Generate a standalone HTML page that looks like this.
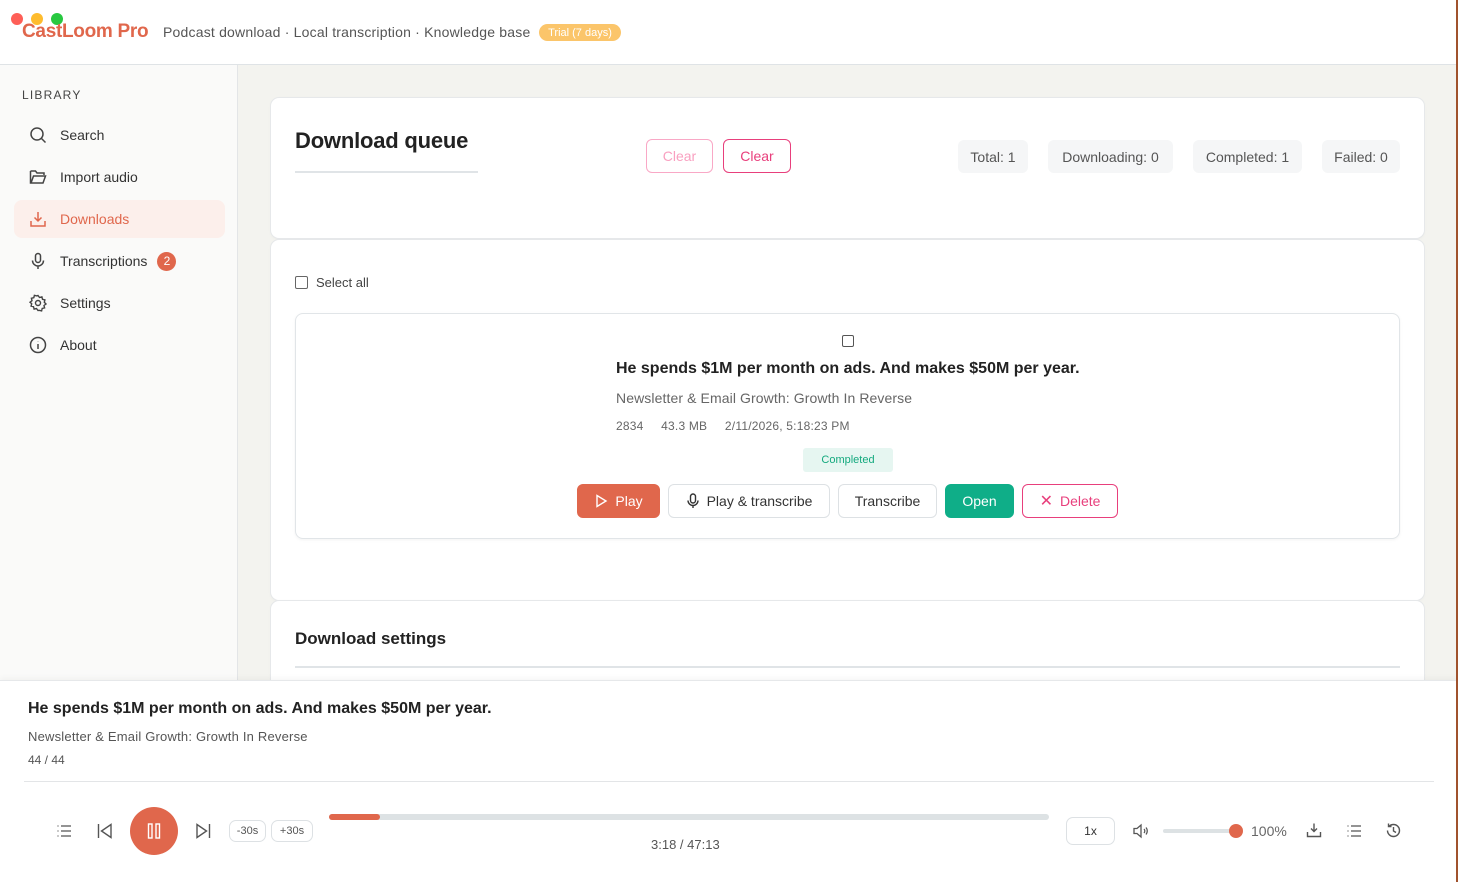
<!DOCTYPE html>
<html><head><meta charset="utf-8"><style>
*{box-sizing:border-box;margin:0;padding:0}
body{width:1458px;height:882px;overflow:hidden;font-family:"Liberation Sans",sans-serif;background:#f3f3ef;position:relative;color:#222}
.top{position:absolute;left:0;top:0;width:1458px;height:65px;background:#fff;border-bottom:1px solid #dfe3e6}
.dot{position:absolute;top:13px;width:12px;height:12px;border-radius:50%}
.side{position:absolute;left:0;top:65px;width:238px;height:620px;background:#fafaf9;border-right:1px solid #e3e5e7}
.nav{position:absolute;left:14px;width:211px;height:38px;display:flex;align-items:center;padding-left:46px;font-size:14px;color:#333;border-radius:8px}
.nav svg{position:absolute;left:15px;top:10px}
.card{position:absolute;left:271px;width:1153px;background:#fff;border-radius:8px;box-shadow:0 0 0 1px #e6e8ea,0 1px 3px rgba(0,0,0,.05)}
.btn{position:absolute;height:34px;border-radius:6px;font-size:14px;display:flex;align-items:center;justify-content:center;gap:7px;border:1px solid #dde1e4;background:#fff;color:#333}
.stat{position:absolute;top:140px;height:33px;border-radius:6px;background:#f5f6f7;font-size:14px;color:#555;display:flex;align-items:center;justify-content:center}
.player{position:absolute;left:0;top:680px;width:1458px;height:202px;background:#fff;border-top:1px solid #e6e8ea;box-shadow:0 -2px 6px rgba(0,0,0,.04)}
.ic{position:absolute}
.small{position:absolute;top:820px;height:22px;border:1px solid #dde1e4;border-radius:7px;font-size:11px;color:#555;display:flex;align-items:center;justify-content:center}
</style></head><body>
<div class="top">
 <div class="dot" style="left:11px;background:#fe5f57"></div>
 <div class="dot" style="left:31px;background:#febc2e"></div>
 <div class="dot" style="left:51px;background:#28c840"></div>
 <div style="position:absolute;left:22px;top:21px;font-size:19px;color:#e0674c;font-weight:bold;letter-spacing:-0.3px">CastLoom Pro</div>
 <div style="position:absolute;left:163px;top:24px;font-size:14px;color:#555;letter-spacing:0.2px">Podcast download · Local transcription · Knowledge base</div>
 <div style="position:absolute;left:539px;top:24px;height:17px;width:82px;border-radius:9px;background:#fbc56a;color:#fff;font-size:11px;display:flex;align-items:center;justify-content:center">Trial (7 days)</div>
</div>
<div style="position:absolute;right:0;top:0;width:2px;height:882px;background:#a0522d;z-index:5"></div>
<div class="side">
 <div style="position:absolute;left:22px;top:23px;font-size:12px;letter-spacing:1.2px;color:#444">LIBRARY</div>
 <div class="nav" style="top:51px"><svg width="18" height="18" viewBox="0 0 18 18" fill="none" stroke="#444" stroke-width="1.5"><circle cx="8" cy="8" r="6"/><path d="M12.5 12.5l4 4"/></svg>Search</div>
 <div class="nav" style="top:93px"><svg width="18" height="18" viewBox="0 0 18 18" fill="none" stroke="#444" stroke-width="1.5"><path d="M1.5 3h5l1.5 2h7v2M1.5 3v12h12.5l2.5-7H4.5L2 15"/></svg>Import audio</div>
 <div class="nav" style="top:135px;background:#fcefeb;color:#e0674c"><svg width="18" height="18" viewBox="0 0 18 18" fill="none" stroke="#e0674c" stroke-width="1.5"><path d="M9 2v9M5.5 7.5L9 11l3.5-3.5M2 11v5h14v-5"/></svg>Downloads</div>
 <div class="nav" style="top:177px"><svg width="18" height="18" viewBox="0 0 18 18" fill="none" stroke="#444" stroke-width="1.5"><rect x="6.5" y="1.5" width="5" height="9" rx="2.5"/><path d="M3.5 8.5a5.5 5.5 0 0011 0M9 14v3"/></svg>Transcriptions<span style="margin-left:10px;width:19px;height:19px;border-radius:50%;background:#e0674c;color:#fff;font-size:12px;display:flex;align-items:center;justify-content:center">2</span></div>
 <div class="nav" style="top:219px"><svg width="18" height="18" viewBox="0 0 18 18" fill="none" stroke="#444" stroke-width="1.4"><circle cx="9" cy="9" r="2.5"/><path d="M9 1.5l1.5 2 2.4-.6.6 2.4 2.4.6-.6 2.4 1.7 1.7-2 1.5.6 2.4-2.4.6-.6 2.4-2.4-.6L9 16.5l-1.5-2-2.4.6-.6-2.4-2.4-.6.6-2.4L1 8.2l2-1.5-.6-2.4 2.4-.6.6-2.4 2.4.6z"/></svg>Settings</div>
 <div class="nav" style="top:261px"><svg width="18" height="18" viewBox="0 0 18 18" fill="none" stroke="#444" stroke-width="1.5"><circle cx="9" cy="9" r="7.5"/><path d="M9 8v5M9 5.2v.3"/></svg>About</div>
</div>

<div class="card" style="top:98px;height:140px">
 <div style="position:absolute;left:24px;top:30px;font-size:22px;font-weight:bold;color:#222;letter-spacing:-0.2px">Download queue</div>
 <div style="position:absolute;left:24px;top:73px;width:183px;height:2px;background:#e0e4e7"></div>
</div>
<div class="btn" style="left:646px;top:139px;width:67px;border-color:#f9a8c6;color:#f9a0c0">Clear</div>
<div class="btn" style="left:723px;top:139px;width:68px;border-color:#e83f7c;color:#e83f7c">Clear</div>
<div class="stat" style="left:958px;width:70px">Total: 1</div>
<div class="stat" style="left:1048px;width:125px">Downloading: 0</div>
<div class="stat" style="left:1193px;width:109px">Completed: 1</div>
<div class="stat" style="left:1322px;width:78px">Failed: 0</div>

<div class="card" style="top:240px;height:360px">
 <div style="position:absolute;left:24px;top:36px;width:13px;height:13px;border:1px solid #666;border-radius:2px"></div>
 <div style="position:absolute;left:45px;top:35px;font-size:13px;color:#444">Select all</div>
 <div style="position:absolute;left:24px;top:73px;width:1105px;height:226px;border:1px solid #e1e5e8;border-radius:8px;box-shadow:0 1px 3px rgba(0,0,0,.05)">
  <div style="position:absolute;left:546px;top:21px;width:12px;height:12px;border:1px solid #555;border-radius:2px"></div>
  <div style="position:absolute;left:320px;top:46px;font-size:16px;font-weight:bold;color:#222">He spends $1M per month on ads. And makes $50M per year.</div>
  <div style="position:absolute;left:320px;top:76px;font-size:14px;color:#666;letter-spacing:0.1px">Newsletter &amp; Email Growth: Growth In Reverse</div>
  <div style="position:absolute;left:320px;top:105px;font-size:12px;color:#666;letter-spacing:0.2px">2834&nbsp;&nbsp;&nbsp;&nbsp;&nbsp;43.3 MB&nbsp;&nbsp;&nbsp;&nbsp;&nbsp;2/11/2026, 5:18:23 PM</div>
  <div style="position:absolute;left:507px;top:134px;width:90px;height:24px;background:#e6f6f1;color:#14a97e;font-size:11px;border-radius:3px;display:flex;align-items:center;justify-content:center">Completed</div>
 </div>
</div>
<div class="btn" style="left:577px;top:484px;width:83px;background:#e0674c;border-color:#e0674c;color:#fff"><svg width="14" height="14" viewBox="0 0 14 14" fill="none" stroke="#fff" stroke-width="1.4"><path d="M3 1.5v11l9-5.5z"/></svg>Play</div>
<div class="btn" style="left:668px;top:484px;width:162px"><svg width="14" height="16" viewBox="0 0 14 16" fill="none" stroke="#333" stroke-width="1.4"><rect x="4.5" y="1" width="5" height="9" rx="2.5"/><path d="M2 7.5a5 5 0 0010 0M7 12.5V15"/></svg>Play &amp; transcribe</div>
<div class="btn" style="left:838px;top:484px;width:99px">Transcribe</div>
<div class="btn" style="left:945px;top:484px;width:69px;background:#0fae88;border-color:#0fae88;color:#fff">Open</div>
<div class="btn" style="left:1022px;top:484px;width:96px;border-color:#e83f7c;color:#e83f7c"><span style="font-size:16px">✕</span>Delete</div>

<div class="card" style="top:601px;height:120px">
 <div style="position:absolute;left:24px;top:28px;font-size:17px;font-weight:bold;color:#222">Download settings</div>
 <div style="position:absolute;left:24px;top:65px;width:1105px;height:2px;background:#e0e4e7"></div>
</div>

<div class="player">
 <div style="position:absolute;left:28px;top:19px;font-size:16px;font-weight:bold;color:#222">He spends $1M per month on ads. And makes $50M per year.</div>
 <div style="position:absolute;left:28px;top:48px;font-size:13px;color:#555;letter-spacing:0.2px">Newsletter &amp; Email Growth: Growth In Reverse</div>
 <div style="position:absolute;left:28px;top:72px;font-size:12px;color:#555">44 / 44</div>
 <div style="position:absolute;left:24px;top:100px;width:1410px;height:1px;background:#e3e5e7"></div>
</div>
<svg class="ic" style="left:56px;top:823px" width="16" height="16" viewBox="0 0 16 16" fill="none" stroke="#555" stroke-width="1.3"><path d="M5 3h10M5 8h10M5 13h10M1.5 3h1M1.5 8h1M1.5 13h1"/></svg>
<svg class="ic" style="left:96px;top:822px" width="18" height="18" viewBox="0 0 18 18" fill="none" stroke="#555" stroke-width="1.4"><path d="M2.5 2v14M15 2.5v13L5.5 9z"/></svg>
<div style="position:absolute;left:130px;top:807px;width:48px;height:48px;border-radius:50%;background:#e0674c"></div>
<svg class="ic" style="left:146px;top:823px" width="16" height="16" viewBox="0 0 16 16" fill="none" stroke="#fff" stroke-width="1.4"><rect x="2.5" y="1" width="3.5" height="14"/><rect x="10" y="1" width="3.5" height="14"/></svg>
<svg class="ic" style="left:194px;top:822px" width="18" height="18" viewBox="0 0 18 18" fill="none" stroke="#555" stroke-width="1.4"><path d="M15.5 2v14M3 2.5v13L12.5 9z"/></svg>
<div class="small" style="left:229px;width:37px">-30s</div>
<div class="small" style="left:271px;width:42px">+30s</div>
<div style="position:absolute;left:329px;top:814px;width:720px;height:6px;border-radius:3px;background:#dde2e4"></div>
<div style="position:absolute;left:329px;top:814px;width:51px;height:6px;border-radius:3px;background:#e0674c"></div>
<div style="position:absolute;left:651px;top:837px;font-size:13px;color:#555">3:18 / 47:13</div>
<div class="small" style="left:1066px;top:817px;width:49px;height:28px;font-size:12px;color:#333">1x</div>
<svg class="ic" style="left:1132px;top:823px" width="18" height="16" viewBox="0 0 18 16" fill="none" stroke="#555" stroke-width="1.3"><path d="M2 5.5h3l4-3.5v12l-4-3.5H2z"/><path d="M12 6a3 3 0 010 4M14 4.5a5.5 5.5 0 010 7"/></svg>
<div style="position:absolute;left:1163px;top:829px;width:75px;height:4px;border-radius:2px;background:#dde2e4"></div>
<div style="position:absolute;left:1229px;top:824px;width:14px;height:14px;border-radius:50%;background:#e0674c"></div>
<div style="position:absolute;left:1251px;top:823px;font-size:14px;color:#666">100%</div>
<svg class="ic" style="left:1306px;top:822px" width="16" height="16" viewBox="0 0 16 16" fill="none" stroke="#555" stroke-width="1.4"><path d="M8 1.5v8M5 6.5l3 3 3-3M1.5 10v4.5h13V10"/></svg>
<svg class="ic" style="left:1346px;top:823px" width="16" height="16" viewBox="0 0 16 16" fill="none" stroke="#555" stroke-width="1.3"><path d="M5 3h10M5 8h10M5 13h10M1.5 3h1M1.5 8h1M1.5 13h1"/></svg>
<svg class="ic" style="left:1385px;top:822px" width="17" height="17" viewBox="0 0 17 17" fill="none" stroke="#555" stroke-width="1.4"><path d="M2.5 8.5a6 6 0 106-6 6 6 0 00-4.5 2M3.5 1.5v3h3M8.5 5v4l2.5 1.5"/></svg>
</body></html>
